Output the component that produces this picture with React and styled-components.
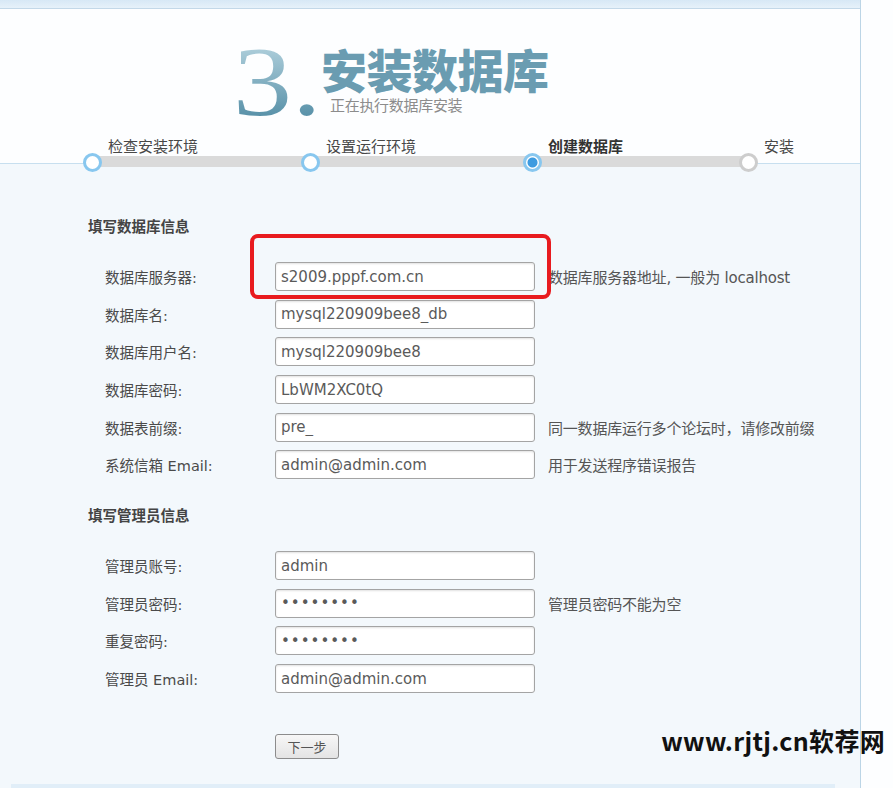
import React from "react";
import styled, { createGlobalStyle } from "styled-components";

const Global = createGlobalStyle`
  html, body { margin: 0; padding: 0; background: #fdfeff; }
  body { font-family: "DejaVu Sans", "Noto Sans CJK SC", sans-serif; }
  * { box-sizing: border-box; }
`;

const Page = styled.div`
  position: relative;
  display: flex;
  width: 893px;
  height: 788px;
  overflow: hidden;
`;

const Main = styled.div`
  width: 861px;
  border-right: 1px solid #bcd5e6;
  display: flex;
  flex-direction: column;
  background: #f3f8fc;
`;

const Side = styled.div`
  flex: 1;
  background: #fdfeff;
`;

const TopStrip = styled.div`
  height: 10px;
  background: linear-gradient(#d7e8f5, #e6f1f9);
  border-bottom: 1px solid #c3d8e8;
  box-shadow: 0 1px 0 #ffffff, 0 2px 0 #d6e6f1;
`;

const Header = styled.div`
  background: #fdfeff;
  border-top: 2px solid transparent;
  border-bottom: 1px solid #c7dfef;
  padding-top: 21px;
  display: flex;
  flex-direction: column;
`;

const TitleRow = styled.div`
  display: flex;
  align-items: flex-start;
  padding-left: 233px;
  height: 100px;
`;

const Num = styled.div`
  font-family: "Liberation Serif", serif;
  font-size: 100px;
  line-height: 1;
  width: 74px;
  margin-right: 14px;
  white-space: nowrap;
  transform: scaleX(1.18);
  transform-origin: left center;
  background: linear-gradient(#b3d2de 10%, #4c88a1 95%);
  -webkit-background-clip: text;
  background-clip: text;
  color: transparent;
`;

const TitleText = styled.div`
  display: flex;
  flex-direction: column;
  margin-top: 13px;
`;

const Title = styled.div`
  font-family: "Noto Sans CJK SC", sans-serif;
  font-weight: 900;
  font-size: 46px;
  line-height: 1;
  color: #6a9cb1;
  letter-spacing: -0.5px;
`;

const Sub = styled.div`
  font-family: "Noto Sans CJK SC", sans-serif;
  font-size: 15px;
  line-height: 18px;
  color: #8c8c8c;
  margin-top: 5px;
  margin-left: 9px;
  letter-spacing: -0.3px;
`;

const Steps = styled.div`
  position: relative;
  z-index: 1;
  display: grid;
  grid-template-columns: 218px 222px 216px 80px;
  margin: 7px 0 -9px 83px;
  &::before {
    content: "";
    position: absolute;
    left: 9px;
    width: 656px;
    top: 17px;
    height: 11px;
    background: #dadada;
  }
`;

const Step = styled.div`
  display: flex;
  flex-direction: column;
  position: relative;
`;

const StepLabel = styled.div`
  font-family: "Noto Sans CJK SC", sans-serif;
  font-size: 15px;
  line-height: 14px;
  height: 14px;
  padding-left: 25px;
  color: ${(p) => (p.$active ? "#333" : "#484848")};
  font-weight: ${(p) => (p.$active ? 600 : 400)};
  white-space: nowrap;
`;

const Dot = styled.div`
  width: 19px;
  height: 19px;
  border-radius: 50%;
  border: 3px solid ${(p) => (p.$done === false ? "#cdcdcd" : "#88c7ef")};
  background: ${(p) =>
    p.$active
      ? "radial-gradient(circle, #3d9be0 0 4.5px, #ffffff 5.5px)"
      : "#ffffff"};
`;

const Body = styled.div`
  flex: 1;
  padding: 52px 0 0 88px;
  display: flex;
  flex-direction: column;
`;

const SectionTitle = styled.div`
  font-family: "Noto Sans CJK SC", sans-serif;
  font-size: 14.5px;
  font-weight: 700;
  line-height: 20px;
  color: #444;
  margin-top: ${(p) => p.$gap || 0}px;
`;

const Fields = styled.div`
  display: grid;
  grid-template-columns: 170px 260px auto;
  grid-auto-rows: 29px;
  row-gap: 8.6px;
  margin: 26px 0 0 17px;
  align-items: center;
`;

const Label = styled.div`
  font-size: 14.5px;
  color: #4a4a4a;
  white-space: nowrap;
`;

const Cell = styled.div`
  position: relative;
  height: 29px;
`;

const Input = styled.input`
  width: 260px;
  height: 29px;
  border: 1px solid #a4a4a4;
  border-radius: 3px;
  background: #fff;
  box-shadow: inset 0 1px 2px rgba(0, 0, 0, 0.12);
  padding: 0 5px;
  font-family: "DejaVu Sans", sans-serif;
  font-size: 15px;
  color: #5a5a5a;
  outline: none;
  letter-spacing: ${(p) => (p.type === "password" ? "1px" : "0")};
`;

const Hint = styled.div`
  font-size: 15px;
  color: #555;
  white-space: nowrap;
  letter-spacing: -0.2px;
  padding-left: 13px;
`;

const RedMark = styled.div`
  position: absolute;
  left: -25px;
  top: -28px;
  width: 301px;
  height: 65px;
  border: 4px solid #e81b1f;
  border-radius: 8px;
  pointer-events: none;
`;

const Actions = styled.div`
  margin: 41px 0 0 187px;
`;

const NextButton = styled.button`
  width: 64px;
  height: 25px;
  border: 1px solid #8c8c8c;
  border-radius: 3px;
  background: linear-gradient(#f7f7f7, #e4e4e4);
  font-family: "Noto Sans CJK SC", sans-serif;
  font-size: 13px;
  color: #555;
  padding: 0;
`;

const Footer = styled.div`
  margin: 25px 0 0 -77px;
  width: 824px;
  height: 4px;
  background: #e1eef8;
`;

const Watermark = styled.div`
  position: absolute;
  right: 8px;
  top: 722px;
  font-family: "Noto Sans CJK SC", sans-serif;
  font-weight: 700;
  font-size: 25px;
  line-height: 36px;
  color: #111;
  letter-spacing: 0.3px;
`;

const steps = [
  { label: "检查安装环境" },
  { label: "设置运行环境" },
  { label: "创建数据库", active: true },
  { label: "安装", done: false },
];

const dbFields = [
  { label: "数据库服务器:", value: "s2009.pppf.com.cn", hint: "数据库服务器地址, 一般为 localhost", mark: true },
  { label: "数据库名:", value: "mysql220909bee8_db" },
  { label: "数据库用户名:", value: "mysql220909bee8" },
  { label: "数据库密码:", value: "LbWM2XC0tQ" },
  { label: "数据表前缀:", value: "pre_", hint: "同一数据库运行多个论坛时，请修改前缀" },
  { label: "系统信箱 Email:", value: "admin@admin.com", hint: "用于发送程序错误报告" },
];

const adminFields = [
  { label: "管理员账号:", value: "admin" },
  { label: "管理员密码:", value: "admin123", type: "password", hint: "管理员密码不能为空" },
  { label: "重复密码:", value: "admin123", type: "password" },
  { label: "管理员 Email:", value: "admin@admin.com" },
];

function FieldRows({ items }) {
  return items.map((f) => (
    <React.Fragment key={f.label}>
      <Label>{f.label}</Label>
      <Cell>
        <Input readOnly type={f.type || "text"} defaultValue={f.value} />
        {f.mark && <RedMark />}
      </Cell>
      <Hint>{f.hint || ""}</Hint>
    </React.Fragment>
  ));
}

export default function App() {
  return (
    <>
      <Global />
      <Page>
        <Main>
          <TopStrip />
          <Header>
            <TitleRow>
              <Num>3.</Num>
              <TitleText>
                <Title>安装数据库</Title>
                <Sub>正在执行数据库安装</Sub>
              </TitleText>
            </TitleRow>
            <Steps>
              {steps.map((s) => (
                <Step key={s.label}>
                  <StepLabel $active={s.active}>{s.label}</StepLabel>
                  <Dot $active={s.active} $done={s.done} />
                </Step>
              ))}
            </Steps>
          </Header>
          <Body>
            <SectionTitle>填写数据库信息</SectionTitle>
            <Fields>
              <FieldRows items={dbFields} />
            </Fields>
            <SectionTitle $gap={26}>填写管理员信息</SectionTitle>
            <Fields>
              <FieldRows items={adminFields} />
            </Fields>
            <Actions>
              <NextButton>下一步</NextButton>
            </Actions>
            <Footer />
          </Body>
        </Main>
        <Side />
        <Watermark>www.rjtj.cn软荐网</Watermark>
      </Page>
    </>
  );
}
